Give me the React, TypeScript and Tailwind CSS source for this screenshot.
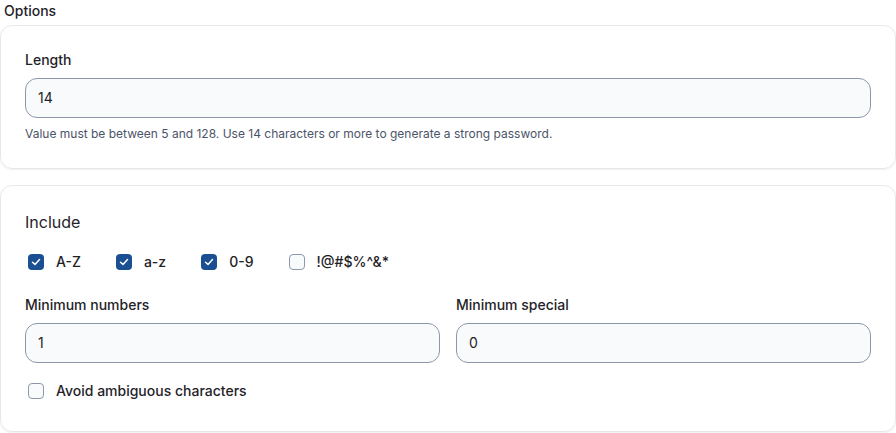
import React from "react";

const Checkbox: React.FC<{ checked?: boolean; label: string }> = ({ checked, label }) => {
  return (
    <label className="flex items-center gap-3 h-5 text-sm font-medium text-[#1f2328]">
      <span
        className={
          checked
            ? "ml-[3px] w-4 h-4 rounded-[4px] bg-[#1b4f91] flex items-center justify-center"
            : "ml-[3px] w-4 h-4 rounded-[4px] border border-[#8c98aa] bg-[#f8fafc]"
        }
      >
        {checked && (
          <svg width="12" height="12" viewBox="0 0 12 12" fill="none">
            <path d="M2.5 6.2 L5 8.4 L9.5 3.6" stroke="white" strokeWidth="1.5" strokeLinecap="round" strokeLinejoin="round" />
          </svg>
        )}
      </span>
      <span>{label}</span>
    </label>
  );
};

const Field: React.FC<{ label: string; value: string }> = ({ label, value }) => {
  return (
    <div className="flex flex-col gap-2 flex-1">
      <span className="text-sm font-medium leading-5 text-[#1f2328]">{label}</span>
      <div className="h-10 rounded-xl border border-[#8c98aa] bg-[#f8fafc] flex items-center px-3 text-sm text-[#1f2328]">
        {value}
      </div>
    </div>
  );
};

export default function App() {
  return (
    <div className="w-[896px] h-[433px] bg-white overflow-hidden" style={{ fontFamily: "Inter, 'Noto Sans', sans-serif" }}>
      <div className="pl-1 text-sm font-medium leading-5 pt-px text-[#1f2328]">Options</div>
      <div className="mt-1 rounded-xl border border-[#e5e7eb] shadow-[0_1px_2px_rgba(0,0,0,0.06)] px-6 pt-6 pb-6">
        <Field label="Length" value="14" />
        <p className="mt-1.5 text-xs leading-5 text-[#4b5468]">
          Value must be between 5 and 128. Use 14 characters or more to generate a strong password.
        </p>
      </div>
      <div className="mt-4 rounded-xl border border-[#e5e7eb] shadow-[0_1px_2px_rgba(0,0,0,0.06)] px-6 pt-6 pb-[30px]">
        <div className="text-base leading-6 text-[#1f2328]">Include</div>
        <div className="mt-[18px] flex items-center gap-8">
          <Checkbox checked label="A-Z" />
          <Checkbox checked label="a-z" />
          <Checkbox checked label="0-9" />
          <Checkbox label="!@#$%^&*" />
        </div>
        <div className="mt-[23px] flex gap-4">
          <Field label="Minimum numbers" value="1" />
          <Field label="Minimum special" value="0" />
        </div>
        <div className="mt-[18px]">
          <Checkbox label="Avoid ambiguous characters" />
        </div>
      </div>
    </div>
  );
}
